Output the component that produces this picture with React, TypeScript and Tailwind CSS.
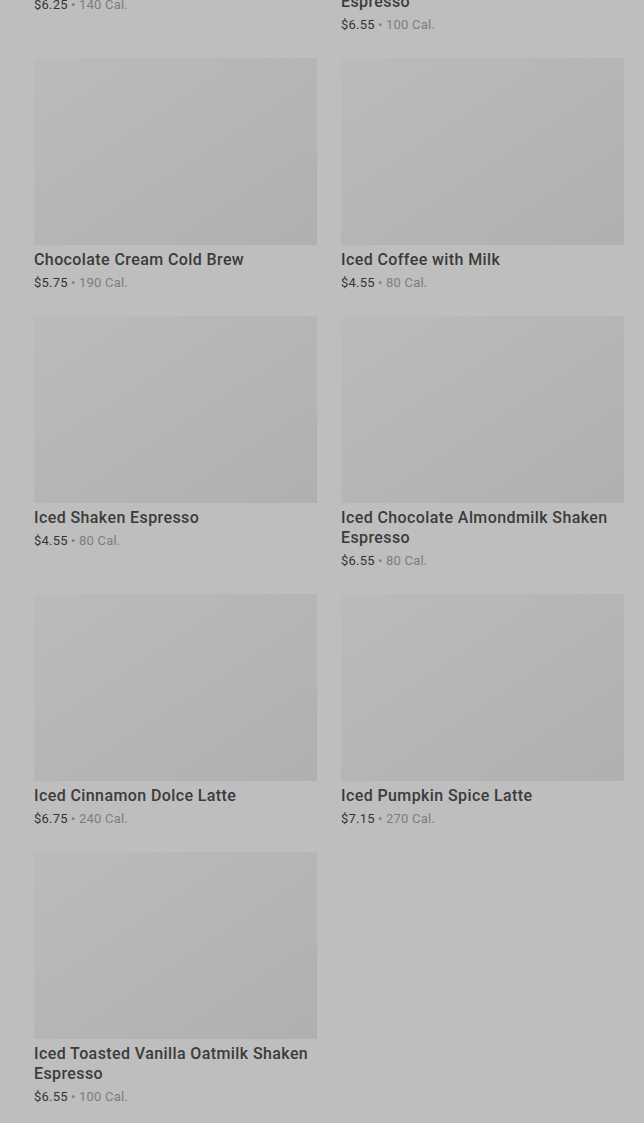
const items = [
  { name: "Iced Caramel Macchiato", price: "$6.25", cal: "140 Cal." },
  { name: "Iced Brown Sugar Oatmilk Shaken Espresso", price: "$6.55", cal: "100 Cal." },
  { name: "Chocolate Cream Cold Brew", price: "$5.75", cal: "190 Cal." },
  { name: "Iced Coffee with Milk", price: "$4.55", cal: "80 Cal." },
  { name: "Iced Shaken Espresso", price: "$4.55", cal: "80 Cal." },
  { name: "Iced Chocolate Almondmilk Shaken Espresso", price: "$6.55", cal: "80 Cal." },
  { name: "Iced Cinnamon Dolce Latte", price: "$6.75", cal: "240 Cal." },
  { name: "Iced Pumpkin Spice Latte", price: "$7.15", cal: "270 Cal." },
  { name: "Iced Toasted Vanilla Oatmilk Shaken Espresso", price: "$6.55", cal: "100 Cal." },
];

function MenuCard({ item }: { item: (typeof items)[0] }) {
  return (
    <div className="flex flex-col">
      <div className="h-[187px] w-full bg-gradient-to-br from-[#bbbbbb] to-[#b0b0b0]" />
      <h3 className="mt-[5px] text-[16px] leading-[20px] font-medium tracking-[0.4px] text-[#3b3b3b]">
        {item.name}
      </h3>
      <p className="mt-[3px] text-[13px] leading-[19px] tracking-[0.2px]">
        <span className="text-[#353535]">{item.price}</span>
        <span className="text-[#7d7d7d]"> • {item.cal}</span>
      </p>
    </div>
  );
}

export default function App() {
  return (
    <div
      className="h-[1123px] overflow-hidden bg-[#bebebe]"
      style={{ fontFamily: "Roboto, 'Noto Sans', sans-serif" }}
    >
      <div className="-mt-[220px] grid grid-cols-2 gap-x-6 gap-y-6 pl-[34px] pr-[20px] pb-6">
        {items.map((item) => (
          <MenuCard key={item.name} item={item} />
        ))}
      </div>
    </div>
  );
}
